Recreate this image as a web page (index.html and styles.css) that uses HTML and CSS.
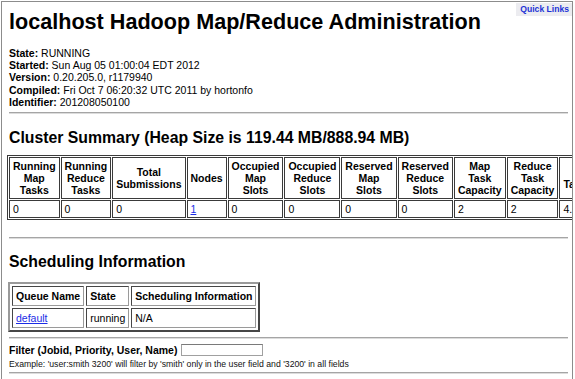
FILE: index.html
```html
<!DOCTYPE html>
<html>
<head>
<meta charset="utf-8">
<title>localhost Hadoop Map/Reduce Administration</title>
<link rel="stylesheet" href="styles.css">
</head>
<body>
<div class="frame">
  <div class="quick"><a href="#">Quick Links</a></div>
  <h1>localhost Hadoop Map/Reduce Administration</h1>
  <div class="info">
    <b>State:</b> RUNNING<br>
    <b>Started:</b> Sun Aug 05 01:00:04 EDT 2012<br>
    <b>Version:</b> 0.20.205.0, r1179940<br>
    <b>Compiled:</b> Fri Oct 7 06:20:32 UTC 2011 by hortonfo<br>
    <b>Identifier:</b> 201208050100
  </div>
  <hr class="rule rule-info">
  <h2 class="h-cluster">Cluster Summary (Heap Size is 119.44 MB/888.94 MB)</h2>
  <table class="summary">
    <tr>
      <th>Running Map Tasks</th>
      <th>Running Reduce Tasks</th>
      <th>Total Submissions</th>
      <th>Nodes</th>
      <th>Occupied Map Slots</th>
      <th>Occupied Reduce Slots</th>
      <th>Reserved Map Slots</th>
      <th>Reserved Reduce Slots</th>
      <th>Map Task Capacity</th>
      <th>Reduce Task Capacity</th>
      <th class="nw">Avg.<br>Tasks/Node</th>
      <th>Blacklisted Nodes</th>
      <th>Graylisted Nodes</th>
      <th>Excluded Nodes</th>
    </tr>
    <tr>
      <td>0</td><td>0</td><td>0</td><td><a href="#">1</a></td><td>0</td><td>0</td><td>0</td><td>0</td><td>2</td><td>2</td><td>4.00</td><td><a href="#">0</a></td><td><a href="#">0</a></td><td><a href="#">0</a></td>
    </tr>
  </table>
  <hr class="rule rule-summary">
  <h2 class="h-sched">Scheduling Information</h2>
  <table class="sched">
    <tr><th>Queue Name</th><th>State</th><th>Scheduling Information</th></tr>
    <tr><td><a href="#">default</a></td><td>running</td><td>N/A</td></tr>
  </table>
  <hr class="rule rule-sched">
  <form class="filter">
    <div class="filter-row"><b>Filter (Jobid, Priority, User, Name)</b> <input type="text" class="filter-input"></div>
    <div class="example">Example: 'user:smith 3200' will filter by 'smith' only in the user field and '3200' in all fields</div>
  </form>
  <hr class="rule rule-filter">
</div>
</body>
</html>
```
FILE: styles.css
```css
html, body {
  margin: 0;
  padding: 0;
  background: #fff;
  overflow: hidden;
}
body {
  font-family: "Liberation Sans", Arial, Helvetica, sans-serif;
  font-size: 10.5px;
  color: #000;
}
a { color: #1b2ce6; }
.frame {
  position: relative;
  margin: 1px 0 0 1px;
  width: 559px;
  height: 420px;
  padding: 0 4px 0 7px;
  border: 1px solid #8c8c8c;
  overflow: hidden;
}
.quick {
  position: absolute;
  top: 1px;
  right: 0;
  background: #ececf0;
  padding: 1px 3px 2px 4px;
  font-size: 8.6px;
  font-weight: bold;
  line-height: 10px;
}
.quick a { text-decoration: none; color: #1d33d6; }
h1 {
  font-size: 21.6px;
  line-height: 26px;
  margin: 7px 0 12px 0;
  font-weight: bold;
}
.info {
  line-height: 12.2px;
}
.rule {
  height: 0;
  margin: 0;
  border: 0;
  border-top: 1px solid #a5a5a5;
  border-bottom: 1px solid #dcdcdc;
}
.rule-info { margin-top: 4px; }
h2 {
  font-size: 15.8px;
  line-height: 19px;
  font-weight: bold;
  margin: 0;
}
.h-cluster { margin: 14px 0 8px 0; }
.h-sched { margin: 13px 0 11px 0; }
.summary {
  border-collapse: separate;
  border-spacing: 1px;
  border: 1px solid #3a3a3a;
  margin-left: -2px;
}
.summary th, .summary td {
  border: 1px solid #3a3a3a;
  padding: 2px 3px;
  line-height: 12px;
}
.summary th { text-align: center; vertical-align: middle; }
.summary td { text-align: left; padding-top: 2px; padding-bottom: 2px; }
.nw { white-space: nowrap; }
.rule-summary { margin-top: 17px; }
.sched {
  border-collapse: separate;
  border-spacing: 2px;
  border: 2px outset #9a9a9a;
  margin-left: -1px;
}
.sched th, .sched td {
  border: 1px inset #9a9a9a;
  padding: 3px 3px;
  line-height: 12px;
  text-align: left;
}
.rule-sched { margin-top: 5px; }
.filter { margin: 4px 0 0 0; }
.filter-row {
  display: flex;
  align-items: center;
  gap: 4px;
  height: 13px;
}
.filter-input {
  width: 80px;
  height: 10px;
  padding: 0;
  margin: 0;
  border: 1px solid #a0a0a0;
  border-top-color: #7a7a7a;
  font-size: 9px;
}
.example {
  font-size: 8.7px;
  line-height: 10px;
  margin-top: 3px;
  color: #111;
}
.rule-filter { margin-top: 3px; }
```
